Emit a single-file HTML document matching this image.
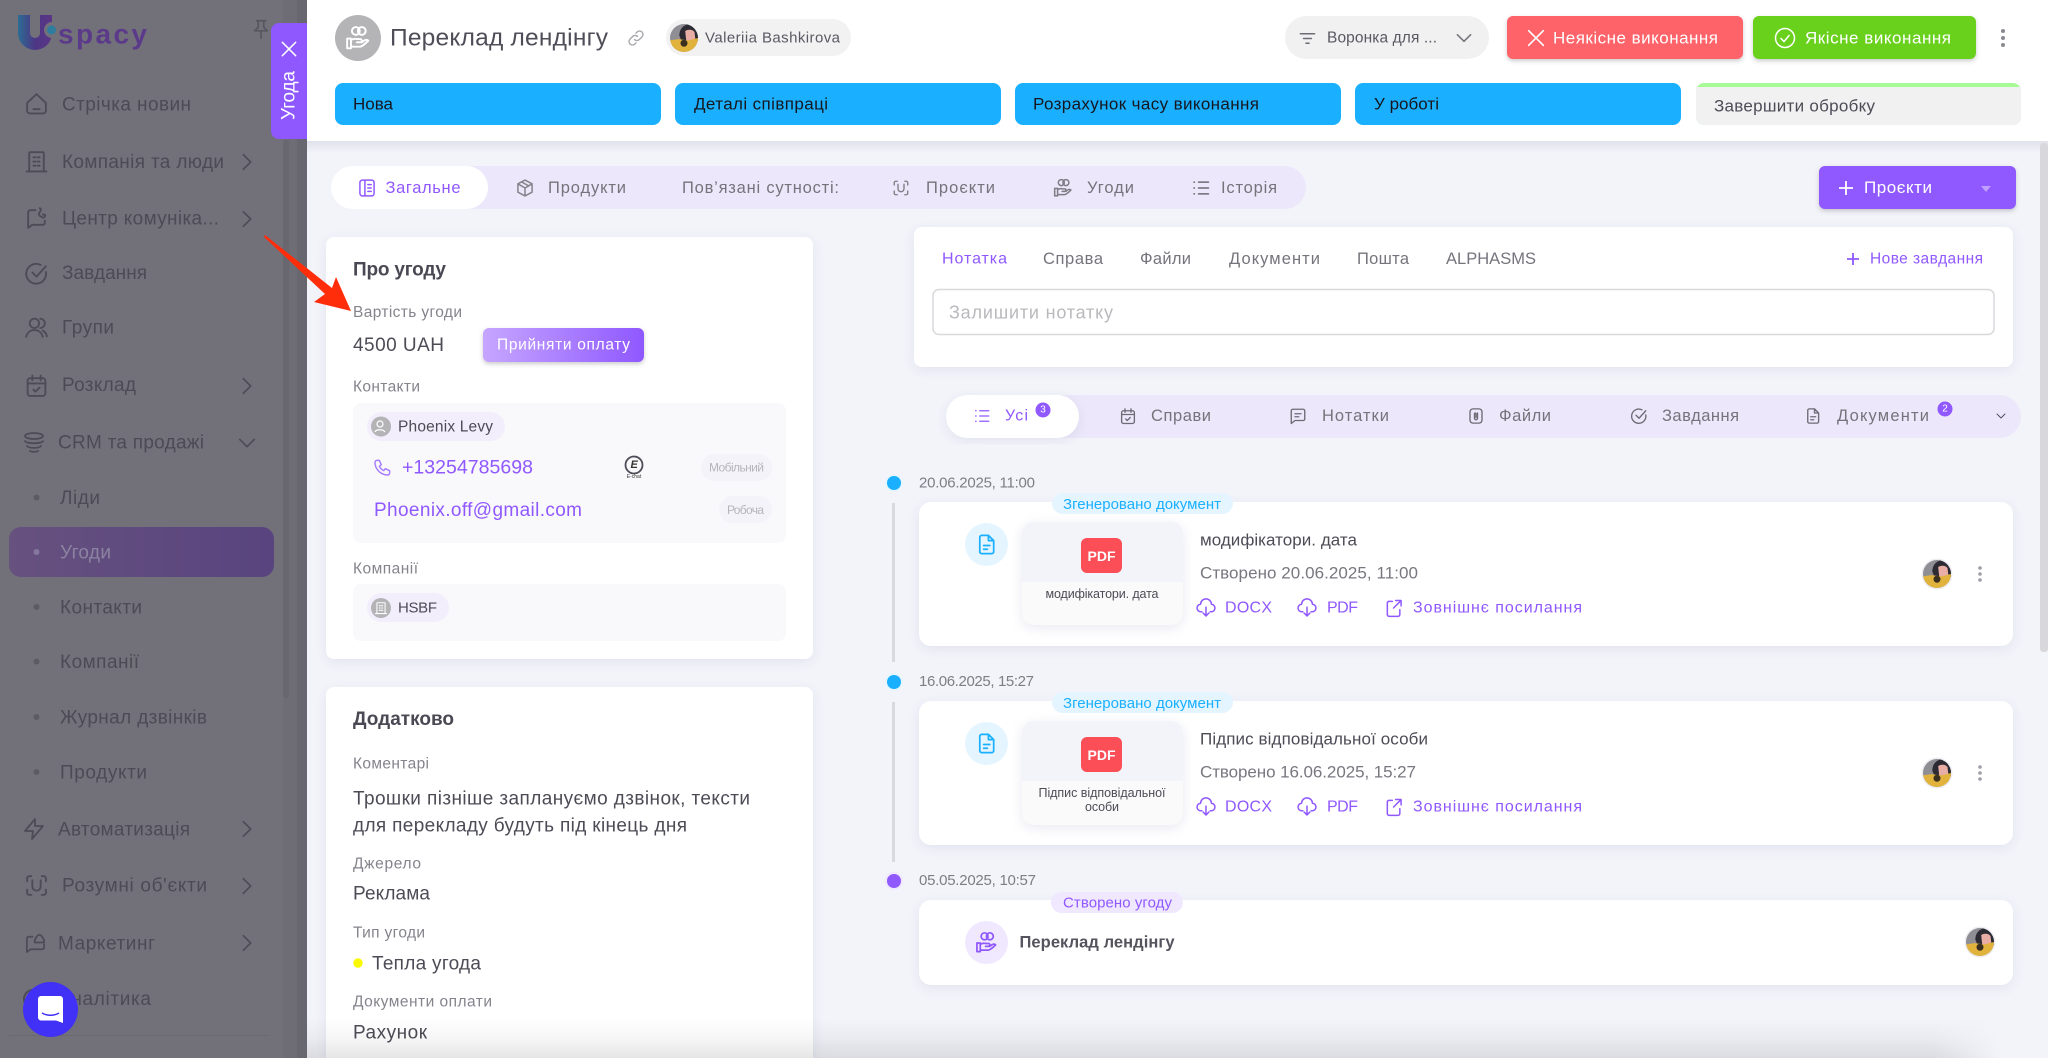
<!DOCTYPE html>
<html lang="uk"><head><meta charset="utf-8"><title>Угода</title>
<style>
html,body{margin:0;padding:0;background:#f3f4fa;width:2048px;height:1058px;overflow:hidden}
svg{display:block}
text{font-family:"Liberation Sans","DejaVu Sans",sans-serif;dominant-baseline:central;fill:#4d4c56}
.ic{fill:none;stroke:currentColor;stroke-width:1.8;stroke-linecap:round;stroke-linejoin:round}
.s{font-size:19px;fill:#4c4b55}
.l{font-size:15.500px;fill:#85848c}
.v{font-size:19px;fill:#4d4c56}
.h{font-size:19px;font-weight:700;fill:#4a4953}
.st{font-size:17px;fill:#16161e}
.tb{font-size:16.500px;fill:#75747c}
.lk{font-size:16px;fill:#9058ff}
.dt{font-size:15px;fill:#7e7d85}
</style></head><body>
<svg xmlns="http://www.w3.org/2000/svg" width="2048" height="1058" viewBox="0 0 2048 1058">
<defs>
<linearGradient id="pay" x1="0" x2="1"><stop offset="0" stop-color="#c6a6ff"/><stop offset="1" stop-color="#8f58ff"/></linearGradient>
<linearGradient id="act" x1="0" x2="1"><stop offset="0" stop-color="#66517f"/><stop offset="1" stop-color="#59447f"/></linearGradient>
<linearGradient id="ulogo" gradientUnits="userSpaceOnUse" x1="18" y1="0" x2="52" y2="0"><stop offset="0" stop-color="#2c6c94"/><stop offset=".5" stop-color="#4d3685"/><stop offset="1" stop-color="#5c3586"/></linearGradient>
<linearGradient id="hs" x1="0" y1="0" x2="0" y2="1"><stop offset="0" stop-color="#c9c9d6" stop-opacity=".45"/><stop offset="1" stop-color="#c9c9d6" stop-opacity="0"/></linearGradient>
<linearGradient id="bot" x1="0" y1="0" x2="0" y2="1"><stop offset="0" stop-color="#000" stop-opacity="0"/><stop offset=".5" stop-color="#000" stop-opacity=".035"/><stop offset="1" stop-color="#000" stop-opacity=".1"/></linearGradient>
<linearGradient id="botm" x1="0" y1="0" x2="1" y2="0"><stop offset="0" stop-color="#fff"/><stop offset=".96" stop-color="#fff"/><stop offset="1" stop-color="#000"/></linearGradient>
<mask id="bm" maskUnits="userSpaceOnUse" x="307" y="1018" width="1693" height="40"><rect x="307" y="1018" width="1693" height="40" fill="url(#botm)"/></mask>
<filter id="sh" x="-5%" y="-10%" width="110%" height="125%"><feDropShadow dx="0" dy="3" stdDeviation="6" flood-color="#bfc0d8" flood-opacity=".35"/></filter>
<filter id="sb" x="-10%" y="-20%" width="120%" height="150%"><feDropShadow dx="0" dy="2" stdDeviation="2" flood-color="#555" flood-opacity=".3"/></filter>
<clipPath id="avc"><circle cx="12" cy="12" r="12"/></clipPath>
<symbol id="av" viewBox="0 0 24 24"><g clip-path="url(#avc)"><rect width="24" height="24" fill="#8f8e94"/><path d="M8 10C8 3 13 0 18 0h6v15H10z" fill="#2c2a33"/><path d="M13 6c3-2 7-1 8 1l1 8h-8z" fill="#e8aea6"/><path d="M0 14l7-1 9 1 8-2v12H0z" fill="#e2b33c"/><circle cx="12" cy="16.500" r="3" fill="#3b3020"/></g></symbol>
<symbol id="home" viewBox="0 0 24 24"><path class="ic" d="M3 11.500 12 3l9 8.500V19a2.500 2.500 0 0 1-2.500 2.500h-13A2.500 2.500 0 0 1 3 19zM9 17.500h6"/></symbol>
<symbol id="bld" viewBox="0 0 24 24"><path class="ic" d="M5 21.500V4a1 1 0 0 1 1-1h12a1 1 0 0 1 1 1v17.500M2.500 21.500h19M9 8h2M13 8h2M9 12h2M13 12h2M9 16h2M13 16h2"/></symbol>
<symbol id="cph" viewBox="0 0 24 24"><path class="ic" d="M11 5H6a2 2 0 0 0-2 2v15l4-3h10a2 2 0 0 0 2-2v-2M15 3c2 0 1 3 0 4s-1 3 1 4 3 2 4 0-1-2-2-2"/></symbol>
<symbol id="chk" viewBox="0 0 24 24"><path class="ic" d="M21 10.500A9.500 9.500 0 1 1 16 3.800M8 11l4 4 9-10"/></symbol>
<symbol id="grp" viewBox="0 0 24 24"><circle class="ic" cx="10" cy="8" r="4.500"/><path class="ic" d="M2 21c1-4 4-6.500 8-6.500s7 2.500 8 6.500M15.500 3.500a4.500 4.500 0 0 1 0 9M18 15c2 1 3.500 3 4 5.500"/></symbol>
<symbol id="cal" viewBox="0 0 24 24"><rect class="ic" x="3.500" y="5" width="17" height="17" rx="2.500"/><path class="ic" d="M8 2.500V7M16 2.500V7M3.500 10h17M9 16l2 2 4-4"/></symbol>
<symbol id="db" viewBox="0 0 24 24"><ellipse class="ic" cx="12" cy="5" rx="9" ry="3"/><path class="ic" d="M3 10c1 3 17 3 18 0M5 15c2 2.500 12 2.500 14 0M8 20c2 1.200 6 1.200 8 0"/></symbol>
<symbol id="blt" viewBox="0 0 24 24"><path class="ic" d="M13 2 3 14h8l-1 8 11-13h-8z"/></symbol>
<symbol id="scn" viewBox="0 0 24 24"><path class="ic" d="M3 8V5a2 2 0 0 1 2-2h2M17 3h2a2 2 0 0 1 2 2v3M21 16v3a2 2 0 0 1-2 2h-2M7 21H5a2 2 0 0 1-2-2v-3M8 7v6a4 4 0 0 0 8 0V7"/></symbol>
<symbol id="che" viewBox="0 0 24 24"><path class="ic" d="M9 6H5a2 2 0 0 0-2 2v14l4-3h12a2 2 0 0 0 2-2v-3M11 12c0-4 3-8 5-8s5 4 5 7v1z"/></symbol>
<symbol id="cr" viewBox="0 0 24 24"><path class="ic" d="m8 4 8 8-8 8" stroke-width="2"/></symbol>
<symbol id="cd" viewBox="0 0 24 24"><path class="ic" d="m4 8 8 8 8-8" stroke-width="2"/></symbol>
<symbol id="pin" viewBox="0 0 24 24"><path class="ic" d="M7 3h10M9 3v7l-4 4h14l-4-4V3M12 14v8"/></symbol>
<symbol id="x" viewBox="0 0 24 24"><path class="ic" d="M4 4l16 16M20 4 4 20"/></symbol>
<symbol id="lnk" viewBox="0 0 24 24"><path class="ic" d="M10 14a4.500 4.500 0 0 0 6.500 0l3.500-3.500A4.500 4.500 0 0 0 13.500 4L12 5.500M14 10a4.500 4.500 0 0 0-6.500 0L4 13.500A4.500 4.500 0 0 0 10.500 20l1.500-1.500"/></symbol>
<symbol id="flt" viewBox="0 0 24 24"><path class="ic" d="M3 6h18M7 12h10M10 18h4"/></symbol>
<symbol id="deal" viewBox="0 0 24 24"><circle class="ic" cx="10" cy="5.500" r="3.600"/><circle class="ic" cx="15.500" cy="5.500" r="3.600"/><path class="ic" d="M2 12.500h3.500v9H2zM5.500 14c2-1.500 3.500-1.500 5.500-1h3a1.500 1.500 0 0 1 0 3h-3M5.500 20h8c2 0 4-1.500 8-5.500-1.500-1.500-3-1-6 1.500"/></symbol>
<symbol id="doc" viewBox="0 0 24 24"><path class="ic" d="M7 2.500h7l5.500 5.500v11.500a2 2 0 0 1-2 2H7a2 2 0 0 1-2-2v-15a2 2 0 0 1 2-2zM14 2.500V8h5.500M9 13h6.500M9 17h4"/></symbol>
<symbol id="dl" viewBox="0 0 24 24"><path class="ic" d="M7 16.500H6a4.500 4.500 0 0 1-.5-9 6.500 6.500 0 0 1 13 0 4.500 4.500 0 0 1-.5 9h-1M12 11v10.500M8.500 18l3.500 3.500 3.500-3.500"/></symbol>
<symbol id="ext" viewBox="0 0 24 24"><path class="ic" d="M10 4H6a2 2 0 0 0-2 2v14a2 2 0 0 0 2 2h11a2 2 0 0 0 2-2v-6M14 3h6.500v6.500M20 3.500l-8.500 8.500"/></symbol>
<symbol id="lst" viewBox="0 0 24 24"><path class="ic" d="M9 5h12M9 12h12M9 19h12M3.500 5h.6M3.500 12h.6M3.500 19h.6" stroke-width="2.200"/></symbol>
<symbol id="bk" viewBox="0 0 24 24"><rect class="ic" x="3.500" y="2.500" width="17" height="19" rx="3"/><path class="ic" d="M9.500 2.500v19M13 8h4M13 12h4M13 16h4"/></symbol>
<symbol id="box" viewBox="0 0 24 24"><path class="ic" d="m12 2.500 8.500 4.500v10L12 21.500 3.500 17V7zM3.500 7l8.500 5 8.500-5M12 12v9.500M8 4.800l8.500 4.700"/></symbol>
<symbol id="nt" viewBox="0 0 24 24"><path class="ic" d="M5 3h14a2 2 0 0 1 2 2v11a2 2 0 0 1-2 2H8l-5 4V5a2 2 0 0 1 2-2zM8 9h8M8 13h5"/></symbol>
<symbol id="clp" viewBox="0 0 24 24"><rect class="ic" x="4" y="2.500" width="16" height="19" rx="4"/><path class="ic" d="M14 8v7a2 2 0 0 1-4 0V9a1 1 0 0 1 2 0v5"/></symbol>
<symbol id="ph" viewBox="0 0 24 24"><path class="ic" d="M5 3h3l2.500 5.500L8 10.500a13 13 0 0 0 5.500 5.500l2-2.500 5.500 2.500v3a2.500 2.500 0 0 1-2.500 2.500C10 21.500 2.500 14 2.500 5.500A2.500 2.500 0 0 1 5 3z"/></symbol>
</defs>

<rect width="2048" height="1058" fill="#f3f4fa"/>

<!-- header -->
<rect x="307" y="141" width="1741" height="12" fill="url(#hs)"/>
<rect x="307" y="0" width="1741" height="141" fill="#fff"/>
<circle cx="358" cy="38" r="23" fill="#b4b3b6"/>
<use href="#deal" x="345" y="25" width="26" height="26" style="color:#fff"/>
<text x="390" y="38" font-size="24.500" textLength="218" style="fill:#4f4e58">Переклад лендінгу</text>
<use href="#lnk" x="627" y="29" width="18" height="18" style="color:#a6a6ab"/>
<rect x="666" y="19" width="185" height="37" rx="18.500" fill="#f2f2f3"/>
<use href="#av" x="670" y="24" width="28" height="28"/>
<text x="705" y="38" font-size="15" textLength="135" style="fill:#5a5962">Valeriia Bashkirova</text>
<rect x="1285" y="16" width="204" height="43" rx="21.500" fill="#f1f1f2"/>
<use href="#flt" x="1298" y="29" width="19" height="19" style="color:#6d6c75"/>
<text x="1327" y="38" font-size="15.500" textLength="110" style="fill:#5a5962">Воронка для ...</text>
<use href="#cd" x="1454" y="28" width="20" height="20" style="color:#74737b"/>
<rect x="1507" y="16" width="236" height="43" rx="6" fill="#ff636b" filter="url(#sb)"/>
<use href="#x" x="1525" y="27" width="22" height="22" style="color:#fff"/>
<text x="1553" y="38" font-size="17" textLength="165" style="fill:#fff">Неякісне виконання</text>
<rect x="1753" y="16" width="223" height="43" rx="6" fill="#69d11e" filter="url(#sb)"/>
<circle cx="1785" cy="38" r="9.500" fill="none" stroke="#fff" stroke-width="1.500"/><path d="m1780.500 38 3.500 3.500 5.500-6.500" fill="none" stroke="#fff" stroke-width="1.500"/>
<text x="1805" y="38" font-size="17" textLength="146" style="fill:#fff">Якісне виконання</text>
<g fill="#8a8991"><circle cx="2003" cy="31" r="2"/><circle cx="2003" cy="38" r="2"/><circle cx="2003" cy="45" r="2"/></g>

<!-- stages -->
<g fill="#1ab0ff">
<rect x="335" y="83" width="326" height="42" rx="8"/><rect x="675" y="83" width="326" height="42" rx="8"/>
<rect x="1015" y="83" width="326" height="42" rx="8"/><rect x="1355" y="83" width="326" height="42" rx="8"/>
</g>
<text x="353" y="104" class="st" textLength="40">Нова</text>
<text x="694" y="104" class="st" textLength="134">Деталі співпраці</text>
<text x="1033" y="104" class="st" textLength="226">Розрахунок часу виконання</text>
<text x="1374" y="104" class="st" textLength="65">У роботі</text>
<rect x="1696" y="83" width="325" height="42" rx="8" fill="#a6fb96"/>
<path d="M1696 87h325v30a8 8 0 0 1-8 8h-309a8 8 0 0 1-8-8z" fill="#f1f1f2"/>
<text x="1714" y="106" font-size="17" textLength="161" style="fill:#4d4c56">Завершити обробку</text>

<!-- top tabs -->
<rect x="331" y="166" width="975" height="43" rx="21.500" fill="#ece7fa"/>
<rect x="331" y="166" width="157" height="43" rx="21.500" fill="#fff"/>
<use href="#bk" x="357" y="178" width="20" height="20" style="color:#9058ff"/>
<text x="385.500" y="188" font-size="16.500" textLength="75" style="fill:#9058ff">Загальне</text>
<use href="#box" x="515" y="178" width="20" height="20" style="color:#85848c"/>
<text x="548" y="188" class="tb" textLength="78">Продукти</text>
<text x="682" y="188" class="tb" textLength="157">Пов’язані сутності:</text>
<use href="#scn" x="892" y="179" width="18" height="18" style="color:#7e7d85"/>
<text x="926" y="188" class="tb" textLength="69">Проєкти</text>
<use href="#deal" x="1053" y="178" width="20" height="20" style="color:#7e7d85"/>
<text x="1087" y="188" class="tb" textLength="47">Угоди</text>
<use href="#lst" x="1191" y="178" width="20" height="20" style="color:#6d6c75"/>
<text x="1221" y="188" class="tb" textLength="56">Історія</text>
<rect x="1819" y="166" width="197" height="43" rx="6" fill="#9058ff" filter="url(#sb)"/>
<path d="M1846 181v14M1839 188h14" stroke="#fff" stroke-width="1.800"/>
<text x="1864" y="187.500" font-size="17" textLength="68" style="fill:#fff">Проєкти</text>
<path d="M1981 186h10l-5 6z" fill="#bf9fff"/>
<rect x="2040" y="143" width="8" height="509" rx="3" fill="#d8d8dc"/>

<!-- card about -->
<rect x="326" y="237" width="487" height="422" rx="8" fill="#fff" filter="url(#sh)"/>
<text x="353" y="270" class="h" textLength="93">Про угоду</text>
<text x="353" y="312.500" class="l" textLength="109">Вартість угоди</text>
<text x="353" y="345.500" class="v" textLength="91">4500 UAH</text>
<rect x="483" y="328" width="161" height="34" rx="6" fill="url(#pay)" filter="url(#sb)"/>
<text x="497" y="345" font-size="15.500" textLength="133" style="fill:#fff">Прийняти оплату</text>
<text x="353" y="387" class="l" textLength="67">Контакти</text>
<rect x="353" y="403" width="433" height="140" rx="8" fill="#f9f9fc"/>
<rect x="367" y="412" width="138" height="29" rx="14.500" fill="#f3eefc"/>
<circle cx="381" cy="426.500" r="10" fill="#b4b3b6"/>
<circle cx="380" cy="424" r="3" fill="none" stroke="#fff" stroke-width="1.200"/><path d="M375 432c1-3 8-3 10 0" fill="none" stroke="#fff" stroke-width="1.200"/>
<text x="398" y="427" font-size="15.500" textLength="95" style="fill:#4d4c56">Phoenix Levy</text>
<use href="#ph" x="373" y="458" width="19" height="19" style="color:#a57aff"/>
<text x="402" y="467.500" font-size="19.500" textLength="131" style="fill:#9058ff">+13254785698</text>
<circle cx="634" cy="465" r="8.500" fill="none" stroke="#4d4c56" stroke-width="1.800"/>
<text x="630.500" y="465" font-size="11" font-weight="700" font-style="italic" style="fill:#333">E</text>
<text x="634" y="477" font-size="5" text-anchor="middle" style="fill:#333">E-chat</text>
<rect x="701" y="454" width="71" height="27" rx="13.500" fill="#f3f3f9"/>
<text x="709" y="467.500" font-size="12" textLength="55" style="fill:#b5b5ba">Мобільний</text>
<text x="374" y="510.500" font-size="19" textLength="208" style="fill:#9058ff">Phoenix.off@gmail.com</text>
<rect x="719" y="496" width="53" height="27" rx="13.500" fill="#f3f3f9"/>
<text x="727" y="510" font-size="12" textLength="37" style="fill:#b5b5ba">Робоча</text>
<text x="353" y="569" class="l" textLength="65">Компанії</text>
<rect x="353" y="584" width="433" height="57" rx="8" fill="#f9f9fc"/>
<rect x="367" y="593" width="82" height="29" rx="14.500" fill="#f3eefc"/>
<circle cx="381" cy="608" r="10" fill="#b4b3b6"/>
<use href="#bld" x="374" y="601" width="14" height="14" style="color:#fff"/>
<text x="398" y="608" font-size="15" textLength="39" style="fill:#4d4c56">HSBF</text>

<!-- card add -->
<path d="M326 1058V695a8 8 0 0 1 8-8h471a8 8 0 0 1 8 8v363z" fill="#fff" filter="url(#sh)"/>
<text x="353" y="719.500" class="h" textLength="101">Додатково</text>
<text x="353" y="764" class="l" textLength="76">Коментарі</text>
<text x="353" y="799" class="v" textLength="397">Трошки пізніше заплануємо дзвінок, тексти</text>
<text x="353" y="826" class="v" textLength="334">для перекладу будуть під кінець дня</text>
<text x="353" y="864" class="l" textLength="68">Джерело</text>
<text x="353" y="894" class="v" textLength="77">Реклама</text>
<text x="353" y="933" class="l" textLength="72">Тип угоди</text>
<circle cx="358" cy="963" r="4.700" fill="#f9f900"/>
<text x="372" y="964" class="v" textLength="109">Тепла угода</text>
<text x="353" y="1002" class="l" textLength="139">Документи оплати</text>
<text x="353" y="1033" class="v" textLength="74">Рахунок</text>

<!-- note card -->
<rect x="914" y="227" width="1099" height="140" rx="8" fill="#fff" filter="url(#sh)"/>
<text x="942" y="259" font-size="16" textLength="65" style="fill:#9058ff">Нотатка</text>
<text x="1043" y="259" class="tb" textLength="60">Справа</text>
<text x="1140" y="259" class="tb" textLength="51">Файли</text>
<text x="1229" y="259" class="tb" textLength="91">Документи</text>
<text x="1357" y="259" class="tb" textLength="52">Пошта</text>
<text x="1446" y="259" class="tb" textLength="90">ALPHASMS</text>
<path d="M1853 253v12M1847 259h12" stroke="#9058ff" stroke-width="1.800"/>
<text x="1870" y="259" font-size="15.500" textLength="113" style="fill:#9058ff">Нове завдання</text>
<rect x="933" y="289.500" width="1061" height="45" rx="6" fill="#fff" stroke="#d8d8dd" stroke-width="1.500"/>
<text x="949" y="312.500" font-size="18" textLength="164" style="fill:#b9b9bd">Залишити нотатку</text>

<!-- sub tabs -->
<rect x="946" y="395" width="1075" height="43" rx="21.500" fill="#ece7fa"/>
<rect x="946" y="395" width="133" height="43" rx="21.500" fill="#fff" filter="url(#sh)"/>
<use href="#lst" x="973" y="407" width="18" height="18" style="color:#9058ff"/>
<text x="1005" y="416" font-size="16" textLength="23" style="fill:#9058ff">Усі</text>
<circle cx="1043" cy="410" r="7.500" fill="#9058ff"/><text x="1043" y="410" font-size="10" text-anchor="middle" style="fill:#fff">3</text>
<use href="#cal" x="1119" y="407" width="18" height="18" style="color:#6d6c75"/>
<text x="1151" y="416" class="tb" textLength="60">Справи</text>
<use href="#nt" x="1289" y="407" width="18" height="18" style="color:#6d6c75"/>
<text x="1322" y="416" class="tb" textLength="67">Нотатки</text>
<use href="#clp" x="1467" y="407" width="18" height="18" style="color:#6d6c75"/>
<text x="1499" y="416" class="tb" textLength="52">Файли</text>
<use href="#chk" x="1630" y="407" width="18" height="18" style="color:#6d6c75"/>
<text x="1662" y="416" class="tb" textLength="77">Завдання</text>
<use href="#doc" x="1804" y="407" width="18" height="18" style="color:#6d6c75"/>
<text x="1837" y="416" class="tb" textLength="92">Документи</text>
<circle cx="1945" cy="409" r="7.500" fill="#9058ff"/><text x="1945" y="409" font-size="10" text-anchor="middle" style="fill:#fff">2</text>
<use href="#cd" x="1995" y="410" width="12" height="12" style="color:#4d4c56"/>

<!-- timeline 1 -->
<circle cx="894" cy="483" r="9" fill="#e6f5ff"/><circle cx="894" cy="483" r="7" fill="#1ab0ff"/>
<text x="919" y="483" class="dt" textLength="116">20.06.2025, 11:00</text>
<rect x="892" y="503" width="3" height="159" fill="#d9d9e0"/>
<rect x="919" y="502" width="1094" height="144" rx="12" fill="#fff" filter="url(#sh)"/>
<rect x="1052" y="493" width="181" height="21" rx="10.500" fill="#e5f5ff"/>
<text x="1063" y="504.500" font-size="15" textLength="158" style="fill:#1ab0ff">Згенеровано документ</text>
<circle cx="986.500" cy="544.500" r="21.500" fill="#e5f5ff"/>
<use href="#doc" x="975" y="533" width="23" height="23" style="color:#1ab0ff"/>
<rect x="1022" y="522" width="161" height="103" rx="12" fill="#fafafa" filter="url(#sh)"/>
<path d="M1022 582v-48a12 12 0 0 1 12-12h137a12 12 0 0 1 12 12v48z" fill="#f3f4fa"/>
<rect x="1081" y="538" width="41" height="35" rx="6" fill="#fb4e57"/>
<text x="1101.500" y="556" font-size="14" font-weight="700" text-anchor="middle" style="fill:#fff">PDF</text>
<text x="1102" y="594" font-size="12.500" text-anchor="middle" textLength="113" style="fill:#4d4c56">модифікатори. дата</text>
<text x="1200" y="540" font-size="17" textLength="157" style="fill:#4d4c56">модифікатори. дата</text>
<text x="1200" y="573" font-size="17" textLength="218" style="fill:#78777f">Створено 20.06.2025, 11:00</text>
<use href="#dl" x="1196" y="598" width="20" height="20" style="color:#9058ff"/>
<text x="1225" y="608" class="lk" textLength="47">DOCX</text>
<use href="#dl" x="1297" y="598" width="20" height="20" style="color:#9058ff"/>
<text x="1327" y="608" class="lk" textLength="31">PDF</text>
<use href="#ext" x="1384" y="598" width="20" height="20" style="color:#9058ff"/>
<text x="1413" y="608" class="lk" textLength="169">Зовнішнє посилання</text>
<circle cx="1937" cy="574" r="15.500" fill="#eeeef2"/><use href="#av" x="1923" y="560" width="28" height="28"/>
<g fill="#9f9ea8"><circle cx="1980" cy="568" r="1.800"/><circle cx="1980" cy="574" r="1.800"/><circle cx="1980" cy="580" r="1.800"/></g>

<!-- timeline 2 -->
<circle cx="894" cy="682" r="9" fill="#e6f5ff"/><circle cx="894" cy="682" r="7" fill="#1ab0ff"/>
<text x="919" y="681.500" class="dt" textLength="115">16.06.2025, 15:27</text>
<rect x="892" y="702" width="3" height="160" fill="#d9d9e0"/>
<rect x="919" y="701" width="1094" height="144" rx="12" fill="#fff" filter="url(#sh)"/>
<rect x="1052" y="692" width="181" height="21" rx="10.500" fill="#e5f5ff"/>
<text x="1063" y="703.500" font-size="15" textLength="158" style="fill:#1ab0ff">Згенеровано документ</text>
<circle cx="986.500" cy="743.500" r="21.500" fill="#e5f5ff"/>
<use href="#doc" x="975" y="732" width="23" height="23" style="color:#1ab0ff"/>
<rect x="1022" y="721" width="161" height="104" rx="12" fill="#fafafa" filter="url(#sh)"/>
<path d="M1022 781v-48a12 12 0 0 1 12-12h137a12 12 0 0 1 12 12v48z" fill="#f3f4fa"/>
<rect x="1081" y="737" width="41" height="35" rx="6" fill="#fb4e57"/>
<text x="1101.500" y="755" font-size="14" font-weight="700" text-anchor="middle" style="fill:#fff">PDF</text>
<text x="1102" y="793" font-size="12.500" text-anchor="middle" textLength="127" style="fill:#4d4c56">Підпис відповідальної</text>
<text x="1102" y="807" font-size="12.500" text-anchor="middle" textLength="34" style="fill:#4d4c56">особи</text>
<text x="1200" y="739" font-size="17" textLength="228" style="fill:#4d4c56">Підпис відповідальної особи</text>
<text x="1200" y="772" font-size="17" textLength="216" style="fill:#78777f">Створено 16.06.2025, 15:27</text>
<use href="#dl" x="1196" y="797" width="20" height="20" style="color:#9058ff"/>
<text x="1225" y="807" class="lk" textLength="47">DOCX</text>
<use href="#dl" x="1297" y="797" width="20" height="20" style="color:#9058ff"/>
<text x="1327" y="807" class="lk" textLength="31">PDF</text>
<use href="#ext" x="1384" y="797" width="20" height="20" style="color:#9058ff"/>
<text x="1413" y="807" class="lk" textLength="169">Зовнішнє посилання</text>
<circle cx="1937" cy="773" r="15.500" fill="#eeeef2"/><use href="#av" x="1923" y="759" width="28" height="28"/>
<g fill="#9f9ea8"><circle cx="1980" cy="767" r="1.800"/><circle cx="1980" cy="773" r="1.800"/><circle cx="1980" cy="779" r="1.800"/></g>

<!-- timeline 3 -->
<circle cx="894" cy="881" r="9" fill="#f0e8ff"/><circle cx="894" cy="881" r="7" fill="#9058ff"/>
<text x="919" y="880.500" class="dt" textLength="117">05.05.2025, 10:57</text>
<rect x="919" y="900" width="1094" height="85" rx="12" fill="#fff" filter="url(#sh)"/>
<rect x="1051" y="892" width="132" height="21" rx="10.500" fill="#f0e8ff"/>
<text x="1063" y="903" font-size="15" textLength="109" style="fill:#9058ff">Створено угоду</text>
<circle cx="986.500" cy="942.500" r="21.500" fill="#f0e8ff"/>
<use href="#deal" x="975" y="931" width="23" height="23" style="color:#9058ff"/>
<text x="1019.500" y="942.500" font-size="16.500" font-weight="700" textLength="155" style="fill:#55545e">Переклад лендінгу</text>
<circle cx="1980" cy="942" r="15.500" fill="#eeeef2"/><use href="#av" x="1966" y="928" width="28" height="28"/>

<!-- bottom fade -->
<rect x="307" y="1018" width="1693" height="40" fill="url(#bot)" mask="url(#bm)"/>

<!-- sidebar -->
<rect width="307" height="1058" fill="#72717a"/>
<rect x="283" y="0" width="14" height="1058" fill="#6e6d76"/>
<rect x="297" y="0" width="10" height="1058" fill="#68676f"/>
<rect x="283" y="140" width="6" height="558" rx="3" fill="#68676f"/>
<path d="M24 15V33a11 11 0 0 0 22 0V15" fill="none" stroke="url(#ulogo)" stroke-width="12"/>
<circle cx="52" cy="30" r="8" fill="#72717a"/>
<circle cx="51.500" cy="30" r="4.500" fill="#2f7d9e"/>
<text x="58" y="34" font-size="28" font-weight="700" textLength="89" style="fill:#5c3a8a">spacy</text>
<use href="#pin" x="250" y="18" width="22" height="22" style="color:#57565f"/>

<g style="color:#4d4c56">
<use href="#home" x="24" y="91" width="25" height="25"/>
<use href="#bld" x="24" y="149" width="25" height="25"/>
<use href="#cph" x="24" y="205" width="25" height="25"/>
<use href="#chk" x="24" y="261" width="25" height="25"/>
<use href="#grp" x="24" y="315" width="25" height="25"/>
<use href="#cal" x="24" y="373" width="25" height="25"/>
<use href="#db" x="22" y="431" width="24" height="24"/>
<use href="#blt" x="22" y="816" width="24" height="26"/>
<use href="#scn" x="24" y="873" width="25" height="25"/>
<use href="#che" x="24" y="931" width="23" height="23"/>
<circle cx="33" cy="999" r="9" fill="none" stroke="currentColor" stroke-width="2"/>
<use href="#cr" x="236" y="151" width="22" height="22"/>
<use href="#cr" x="236" y="208" width="22" height="22"/>
<use href="#cr" x="236" y="375" width="22" height="22"/>
<use href="#cd" x="236" y="432" width="22" height="22"/>
<use href="#cr" x="236" y="818" width="22" height="22"/>
<use href="#cr" x="236" y="875" width="22" height="22"/>
<use href="#cr" x="236" y="932" width="22" height="22"/>
</g>
<text x="62" y="105" class="s" textLength="129">Стрічка новин</text>
<text x="62" y="162.500" class="s" textLength="162">Компанія та люди</text>
<text x="62" y="219" class="s" textLength="157">Центр комуніка...</text>
<text x="62" y="273.500" class="s" textLength="85">Завдання</text>
<text x="62" y="328" class="s" textLength="52">Групи</text>
<text x="62" y="385.500" class="s" textLength="74">Розклад</text>
<text x="58" y="443" class="s" textLength="146">CRM та продажі</text>
<rect x="9" y="527" width="265" height="50" rx="12" fill="url(#act)"/>
<g fill="#5c5b64"><circle cx="36.500" cy="497.500" r="3"/><circle cx="36.500" cy="607" r="3"/><circle cx="36.500" cy="661.500" r="3"/><circle cx="36.500" cy="717" r="3"/><circle cx="36.500" cy="772" r="3"/></g>
<circle cx="36.500" cy="552" r="3" fill="#84799d"/>
<text x="60" y="498.500" class="s" textLength="40">Ліди</text>
<text x="60" y="553" class="s" textLength="51" style="fill:#8b83a0">Угоди</text>
<text x="60" y="608" class="s" textLength="82">Контакти</text>
<text x="60" y="662.500" class="s" textLength="79">Компанії</text>
<text x="60" y="718" class="s" textLength="147">Журнал дзвінків</text>
<text x="60" y="773" class="s" textLength="87">Продукти</text>
<text x="58" y="830" class="s" textLength="132">Автоматизація</text>
<text x="62" y="886" class="s" textLength="145">Розумні об'єкти</text>
<text x="58" y="944" class="s" textLength="97">Маркетинг</text>
<text x="58" y="999.500" class="s" textLength="93">Аналітика</text>
<rect x="9" y="1035" width="260" height="1" fill="#6a6971"/>
<circle cx="50.500" cy="1009.500" r="27.500" fill="#4130f5"/>
<path d="M41 996h19a3 3 0 0 1 3 3v24l-7-2.500H41a3 3 0 0 1-3-3V999a3 3 0 0 1 3-3z" fill="#fff"/>
<path d="M42 1013c5 3 12 3 17 0" fill="none" stroke="#4130f5" stroke-width="1.500"/>

<!-- deal tab -->
<path d="M307 23h-28a8 8 0 0 0-8 8v100a8 8 0 0 0 8 8h28z" fill="#8f58ff"/>
<use href="#x" x="279" y="39" width="20" height="20" style="color:#fff"/>
<text transform="translate(289 120) rotate(-90)" x="0" y="0" font-size="19" textLength="49" style="fill:#fff">Угода</text>

<!-- arrow -->
<polygon points="265,235 332,288 336,277 351,311 314,302 325,294 264,237" fill="#ff2d0a"/>
</svg>
</body></html>
